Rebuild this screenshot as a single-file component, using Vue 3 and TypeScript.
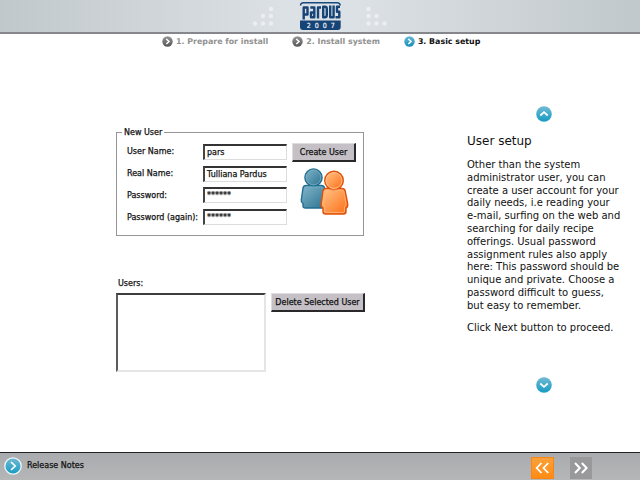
<script setup lang="ts">
import { ref } from 'vue'

interface Step { label: string; active: boolean }
interface Field { label: string; value: string }

const steps: Step[] = [
  { label: '1. Prepare for install', active: false },
  { label: '2. Install system', active: false },
  { label: '3. Basic setup', active: true },
]
const fields = ref<Field[]>([
  { label: 'User Name:', value: 'pars' },
  { label: 'Real Name:', value: 'Tulliana Pardus' },
  { label: 'Password:', value: '******' },
  { label: 'Password (again):', value: '******' },
])
const helpLines: string[] = [
  'Other than the system',
  'administrator user, you can',
  'create a user account for your',
  'daily needs, i.e reading your',
  'e-mail, surfing on the web and',
  'searching for daily recipe',
  'offerings. Usual password',
  'assignment rules also apply',
  'here: This password should be',
  'unique and private. Choose a',
  'password difficult to guess,',
  'but easy to remember.',
]
</script>

<template>
  <div class="screen">
    <header class="header">
      <svg class="brand" width="160" height="32" viewBox="0 0 160 32">
        <g fill="#eceef0">
          <circle cx="31" cy="9" r="2.200" /><circle cx="23" cy="16" r="2.200" /><circle cx="31" cy="16" r="2.200" />
          <circle cx="15" cy="23.500" r="2.200" /><circle cx="23" cy="23.500" r="2.200" /><circle cx="31" cy="23.500" r="2.200" />
          <circle cx="128.500" cy="9" r="2.200" /><circle cx="128.500" cy="16" r="2.200" /><circle cx="136.500" cy="16" r="2.200" />
          <circle cx="128.500" cy="23.500" r="2.200" /><circle cx="136.500" cy="23.500" r="2.200" /><circle cx="144.500" cy="23.500" r="2.200" />
        </g>
        <path d="M60.500 5.500Q60.500 2.700 63.500 2.700H97Q100.200 2.700 100.200 5.500" fill="none" stroke="#194a7e" stroke-width="1.400" />
        <path d="M60 20.500H100.700V27Q100.700 30 97.700 30H63Q60 30 60 27Z" fill="#164477" />
        <g fill="none" stroke="#164477" stroke-width="2.400" stroke-linejoin="round">
          <path d="M63.700 19.500V7.500H67.500V14.500H63.700" />
          <path d="M70.300 7.500H74.300V17.300H71V12.500H74.300" />
          <path d="M78 18.500V7.500H81" />
          <path d="M83.200 6.700H84.800Q86.800 6.700 86.800 8.700V15Q86.800 17.300 84.800 17.300H83.200Z" />
          <path d="M90.200 5.500V17.300H93.600V5.500" />
          <path d="M100 6.700H97V11.800H99.300V17.300H95.500" />
        </g>
        <text x="66.700" y="27.900" class="brand-year">2007</text>
      </svg>
    </header>

    <nav class="steps">
      <div v-for="step in steps" :key="step.label" class="step" :class="{ active: step.active }">
        <svg width="11" height="11" viewBox="0 0 11 11">
          <defs>
            <linearGradient id="stepOn" x2="0" y2="1"><stop stop-color="#69b9d8" /><stop offset="1" stop-color="#168dbb" /></linearGradient>
            <linearGradient id="stepOff" x2="0" y2="1"><stop stop-color="#969696" /><stop offset="1" stop-color="#555" /></linearGradient>
          </defs>
          <circle cx="5.500" cy="5.500" r="5.200" :fill="step.active ? 'url(#stepOn)' : 'url(#stepOff)'" />
          <path d="M4.300 3L7 5.500L4.300 8" fill="none" stroke="#fff" stroke-width="1.500" />
        </svg>
        <span>{{ step.label }}</span>
      </div>
    </nav>

    <main class="main">
      <section class="forms">
        <fieldset class="group">
          <legend>New User</legend>
          <div class="fields">
            <label v-for="(field, i) in fields" :key="i" class="row">
              <span class="label">{{ field.label }}</span>
              <span class="input">{{ field.value }}</span>
            </label>
          </div>
          <div class="side">
            <button class="btn create">Create User</button>
            <svg class="people" width="50" height="48" viewBox="0 0 50 48">
              <defs>
                <linearGradient id="blue" x2="1" y2="1"><stop stop-color="#82b7cb" /><stop offset="1" stop-color="#2b708f" /></linearGradient>
                <linearGradient id="orange" x2="1" y2="1"><stop stop-color="#ffc78c" /><stop offset="1" stop-color="#ff6c13" /></linearGradient>
              </defs>
              <g fill="url(#blue)" stroke="#206e90" stroke-width="1.400" stroke-linejoin="round">
                <path d="M6 17.500H21.500Q24 17.500 24.500 20L27 32Q27.500 34 25 35.500V38Q25 40 23 40H5.500Q3 40 3 38V35.500Q.8 34 1.300 32L3 20Q3.500 17.500 6 17.500Z" />
                <circle cx="13.500" cy="9.500" r="8.600" />
                <path d="M6 19H21.500Q22.800 19 23.200 21L25 31" fill="none" stroke="#76acc1" stroke-width=".8" />
                <circle cx="13.500" cy="9.500" r="7.300" fill="none" stroke="#76acc1" stroke-width=".8" />
              </g>
              <g fill="url(#orange)" stroke="#df510b" stroke-width="1.400" stroke-linejoin="round">
                <path d="M26 20.500H42Q44.700 20.500 45.200 23L47.700 36Q48 39 46 40V43.500Q46 46 43.500 46H25.500Q23 46 23 43.500V40Q20.800 39 21.200 36L23 23Q23.500 20.500 26 20.500Z" />
                <circle cx="34" cy="12.500" r="9.300" />
                <path d="M26 22.100H42Q43.300 22.100 43.800 24L46.100 36.500L44.500 39V43Q44.500 44.400 43 44.400H26Q24.600 44.400 24.600 43V39L22.800 37L24.500 24Q24.700 22.100 26 22.100Z" fill="none" stroke="#ffb477" stroke-width=".9" />
                <circle cx="34" cy="12.500" r="7.900" fill="none" stroke="#ffc28b" stroke-width=".9" />
              </g>
            </svg>
          </div>
        </fieldset>

        <div class="users-label">Users:</div>
        <div class="users">
          <div class="list"></div>
          <button class="btn delete">Delete Selected User</button>
        </div>
      </section>

      <aside class="help">
        <svg class="arrow" width="16" height="16" viewBox="0 0 16 16">
          <defs><linearGradient id="round" x2="0" y2="1"><stop stop-color="#72bad2" /><stop offset="1" stop-color="#169bc3" /></linearGradient></defs>
          <circle cx="8" cy="8" r="7.800" fill="url(#round)" />
          <path d="M4.300 9.500L8 6.200L11.700 9.500" fill="none" stroke="#fff" stroke-width="1.700" />
        </svg>
        <h1>User setup</h1>
        <p class="copy"><span v-for="line in helpLines" :key="line">{{ line }}</span></p>
        <p class="next-hint">Click Next button to proceed.</p>
        <svg class="arrow" width="16" height="16" viewBox="0 0 16 16">
          <circle cx="8" cy="8" r="7.800" fill="url(#round)" />
          <path d="M4.300 6.500L8 9.800L11.700 6.500" fill="none" stroke="#fff" stroke-width="1.700" />
        </svg>
      </aside>
    </main>

    <footer class="footer">
      <div class="notes">
        <svg width="18" height="18" viewBox="0 0 18 18">
          <circle cx="9" cy="9" r="8.200" fill="url(#round)" stroke="#eef7fa" stroke-width="1.300" />
          <path d="M7 5L11.200 9L7 13" fill="none" stroke="#fff" stroke-width="1.700" />
        </svg>
        <span>Release Notes</span>
      </div>
      <div class="pager">
        <svg width="23" height="22" viewBox="0 0 23 22">
          <defs><linearGradient id="back" x2="0" y2="1"><stop stop-color="#fba13b" /><stop offset="1" stop-color="#ff8b12" /></linearGradient></defs>
          <rect x=".5" y=".5" width="22" height="21" fill="url(#back)" stroke="#f88614" />
          <path d="M10.500 6L5.700 11L10.500 16M17.300 6L12.500 11L17.300 16" fill="none" stroke="#fff" stroke-width="1.800" />
        </svg>
        <svg width="22" height="22" viewBox="0 0 22 22">
          <rect width="22" height="22" fill="#99999b" />
          <path d="M5 6L9.800 11L5 16M11.800 6L16.600 11L11.800 16" fill="none" stroke="#fff" stroke-width="2" />
        </svg>
      </div>
    </footer>
  </div>
</template>

<style>
body { margin: 0; overflow: hidden; }
</style>

<style scoped>
.screen { width: 640px; height: 480px; box-sizing: border-box; display: flex; flex-direction: column; background: #fff; color: #111; font-family: "DejaVu Sans", sans-serif; font-size: 8px; }
svg { display: block; flex: none; }
.header { height: 34px; box-sizing: border-box; border-bottom: 2px solid #85878c; display: flex; justify-content: center; background: linear-gradient(90deg, #c1c8cc, #dce1e5 45%, #dce1e5 55%, #c1c8cc); }
.brand-year { font: 7px "DejaVu Sans Condensed", "DejaVu Sans", sans-serif; letter-spacing: 4px; fill: #eef3f7; stroke: #eef3f7; stroke-width: .2px; }
.steps { height: 15px; display: flex; padding-left: 162px; gap: 24px; align-items: center; color: #929292; font-weight: bold; font-size: 7.9px; }
.step { display: flex; align-items: center; gap: 3px; white-space: nowrap; }
.step.active { color: #111; }
.main { flex: 1; display: flex; }
.forms { width: 249px; padding: 78px 103px 0 116px; }
.group { margin: 0; padding: 0; border: 1px solid #969696; width: 248px; height: 109px; box-sizing: border-box; display: flex; min-width: 0; -webkit-text-stroke: .25px #111; }
.group legend { margin-left: 5px; padding: 0 2px; line-height: 11px; height: 11px; }
.fields { width: 176px; padding-top: 3px; display: grid; grid-template-rows: 21px 23px 20px 24px; align-content: start; flex: none; }
.row { display: flex; align-items: center; padding-left: 10px; }
.label { width: 76px; white-space: nowrap; flex: none; }
.input { width: 84px; height: 16px; box-sizing: border-box; border: solid; border-width: 2px 1px 1px 2px; border-color: #333 #ddd #ddd #444; background: #fff; padding-left: 2px; line-height: 14px; white-space: nowrap; }
.side { width: 65px; flex: none; padding-top: 5px; margin-left: -1px; }
.btn { display: block; box-sizing: border-box; margin: 0; border: solid; border-width: 1px 2px 2px 1px; border-color: #dedcdf #29282b #29282b #dedcdf; background: #c4c0c5; color: #111; font: 8px "DejaVu Sans", sans-serif; padding: 0; height: 19px; white-space: nowrap; -webkit-text-stroke: .25px #111; }
.create { width: 64px; }
.people { margin: 6px 0 0 8px; }
.users-label { margin: 42px 0 0 2px; height: 15px; line-height: 11px; -webkit-text-stroke: .25px #111; }
.users { display: flex; gap: 5px; }
.list { width: 150px; height: 79px; box-sizing: border-box; border: 2px solid; border-color: #3d3d3d #e5e5e5 #e5e5e5 #5b5b5b; }
.delete { width: 94px; }
.help { width: 155px; padding-top: 57px; display: flex; flex-direction: column; font-size: 10px; margin-left: -1px; }
.arrow { margin-left: 69px; }
h1 { margin: 11px 0 0; font-size: 12px; font-weight: normal; line-height: 16px; }
p { margin: 0; }
.copy { margin-top: 10px; line-height: 12.800px; }
.copy span { display: block; white-space: nowrap; }
.next-hint { margin: 8px 0 43px; line-height: 13px; white-space: nowrap; }
.footer { height: 28px; box-sizing: border-box; border-top: 1px solid #222; background: linear-gradient(#a9abae, #b5b6b8); display: flex; align-items: center; justify-content: space-between; padding: 0 48px 0 4px; }
.notes { display: flex; gap: 5px; align-items: center; -webkit-text-stroke: .25px #111; }
.notes span { padding-bottom: 2px; }
.notes svg { margin-top: -1px; }
.pager { display: flex; gap: 16px; padding-top: 2px; }
</style>
